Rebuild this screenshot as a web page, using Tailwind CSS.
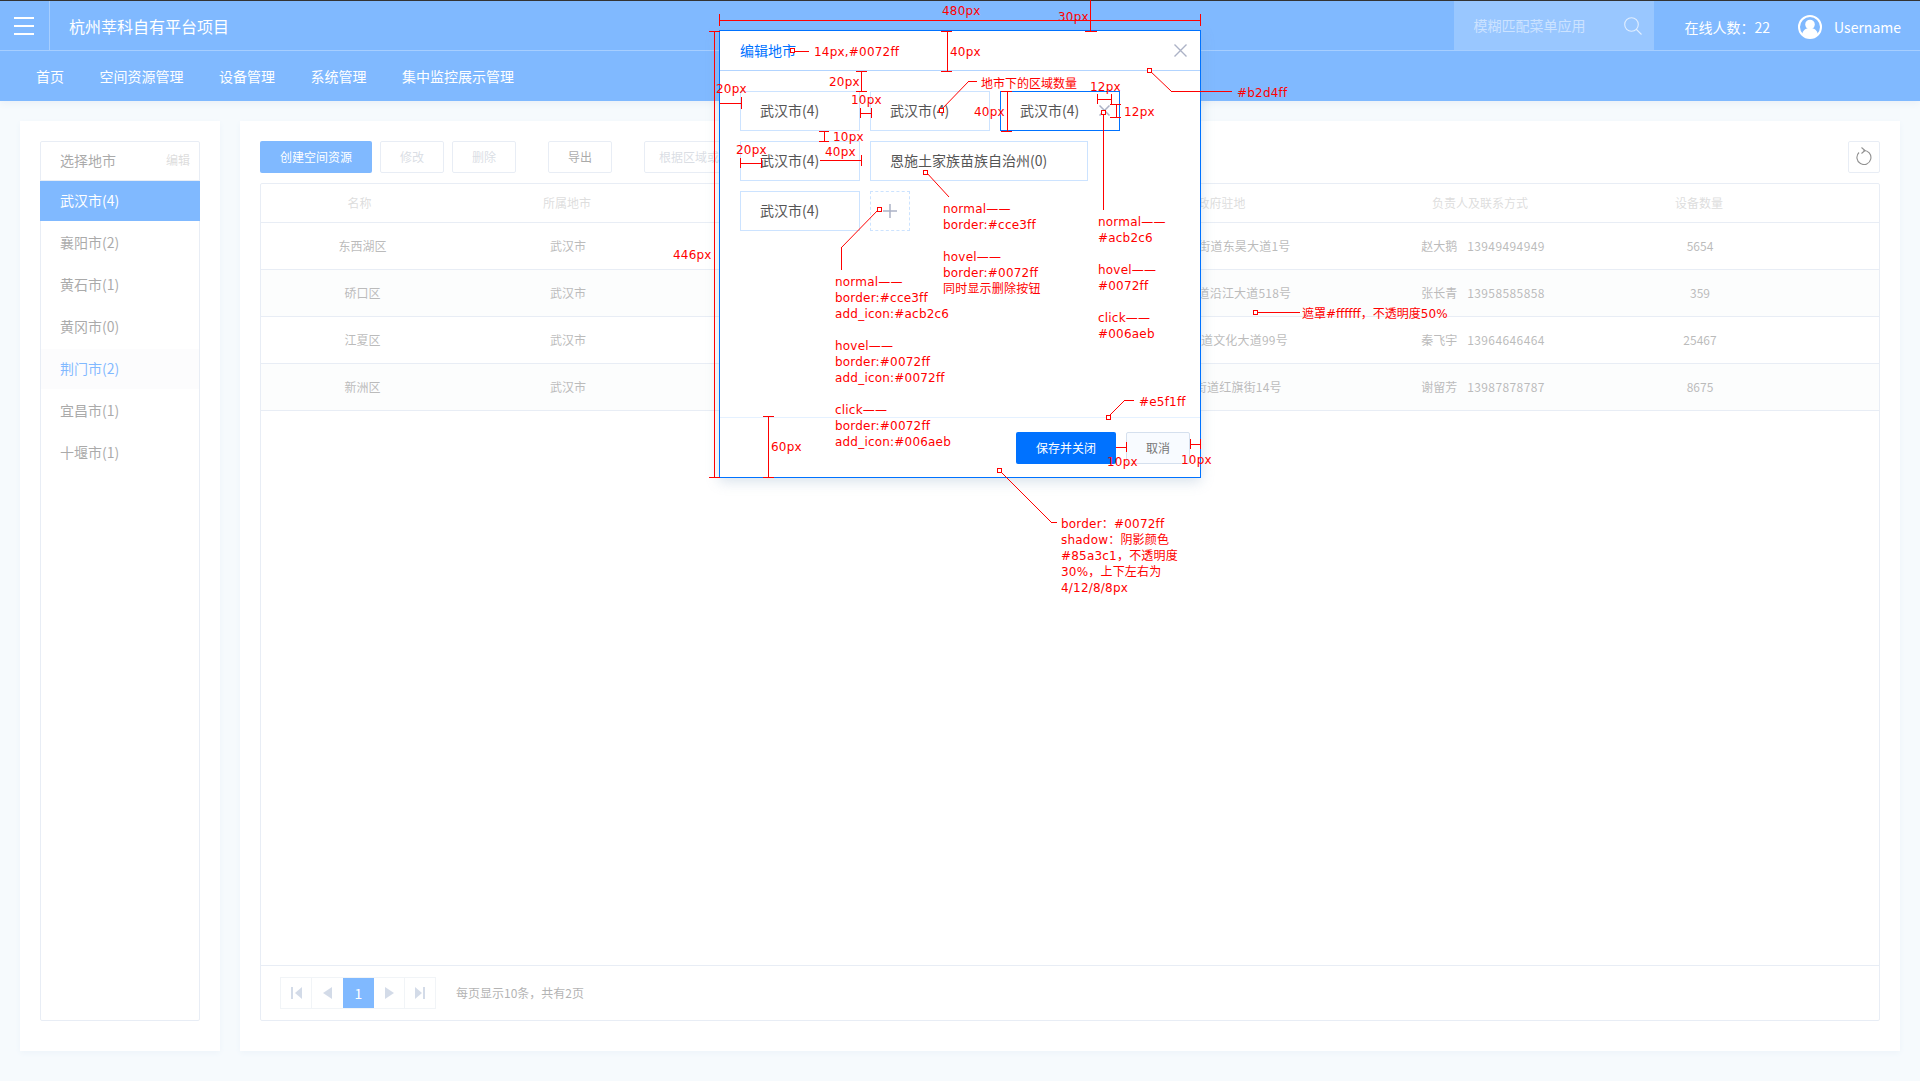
<!DOCTYPE html>
<html lang="en">
<head>
    <meta charset="UTF-8">
    <title>编辑地市</title>
    <script src="https://cdn.jsdelivr.net/npm/@tailwindcss/browser@4"></script>
</head>
<body class="bg-[#edf5fb]">
<div class="relative w-[1920px] h-[1081px] overflow-hidden flex flex-col text-[12px] text-[#333] font-['Noto_Sans_CJK_SC',sans-serif]">

    <!-- Top bar -->
    <header class="bg-[#0072ff] text-white shadow-[0_2px_8px_rgba(0,60,140,0.12)] relative">
        <div class="h-[51px] border-t border-t-[#333] border-b border-b-white/30 flex items-center">
            <button class="w-[50px] h-full border-r border-white/30 flex flex-col items-center justify-center gap-[6px] pr-[1px]">
                <span class="block w-[20px] h-[2px] bg-white"></span>
                <span class="block w-[20px] h-[2px] bg-white"></span>
                <span class="block w-[20px] h-[2px] bg-white"></span>
            </button>
            <div class="ml-[19px] text-[16px]">杭州莘科自有平台项目</div>
            <div class="ml-auto w-[200px] h-full bg-white/20 flex items-center justify-between pl-[20px] pr-[12px]">
                <span class="text-[14px] text-white/50">模糊匹配菜单应用</span>
                <svg width="18" height="18" viewBox="0 0 18 18" fill="none" stroke="#fff" stroke-opacity="0.7" stroke-width="1.1"><circle cx="7.5" cy="7.5" r="6.8"/><path d="M12.5 12.5l5 5"/></svg>
            </div>
            <div class="ml-[31px] mt-[3px] text-[14px]">在线人数：22</div>
            <svg class="ml-[28px] mt-[2px]" width="24" height="24" viewBox="0 0 24 24"><circle cx="12" cy="12" r="11" fill="none" stroke="#fff" stroke-width="2"/><circle cx="12" cy="9.5" r="4.800" fill="#fff"/><path d="M4 19.500c1-4.500 4-6.500 8-6.500s7 2 8 6.500c-2 2.500-4.500 3.500-8 3.500s-6-1-8-3.500z" fill="#fff"/></svg>
            <div class="ml-[12px] mr-[19px] mt-[3px] text-[14px]">Username</div>
        </div>
        <nav class="h-[50px] flex items-center px-[36px] text-[14px] gap-[35.5px]">
            <a>首页</a><a>空间资源管理</a><a>设备管理</a><a>系统管理</a><a>集中监控展示管理</a>
        </nav>
    </header>

    <!-- Content -->
    <main class="flex gap-[20px] px-[20px] pt-[20px] h-[950px]">
        <aside class="w-[200px] h-[930px] bg-white pt-[20px] px-[20px] pb-[30px] shadow-[0_2px_6px_rgba(120,160,210,0.15)]">
            <div class="h-full border border-[#d1dbeb] rounded-[2px]">
                <div class="h-[39px] flex items-center justify-between pl-[19px] pr-[9px] pb-[2px] border-b border-[#d1dbeb]">
                    <span class="text-[14px] text-[#555]">选择地市</span>
                    <span class="text-[#bbb]">编辑</span>
                </div>
                <div class="h-[40px] flex items-center pb-[2px] text-[14px] bg-[#0072ff] text-white -mx-[1px] pl-[20px]">武汉市(4)</div>
                <div class="h-[42px] flex items-center pl-[19px] text-[14px] text-[#555]">襄阳市(2)</div>
                <div class="h-[42px] flex items-center pl-[19px] text-[14px] text-[#555]">黄石市(1)</div>
                <div class="h-[42px] flex items-center pl-[19px] text-[14px] text-[#555]">黄冈市(0)</div>
                <div class="h-[40px] mt-[2px] flex items-center pl-[19px] pb-[2px] text-[14px] text-[#0072ff] bg-[#f8f9fb]">荆门市(2)</div>
                <div class="h-[42px] flex items-center pl-[19px] text-[14px] text-[#555]">宜昌市(1)</div>
                <div class="h-[42px] flex items-center pl-[19px] text-[14px] text-[#555]">十堰市(1)</div>
            </div>
        </aside>

        <section class="w-[1660px] h-[930px] bg-white pt-[20px] px-[20px] pb-[30px] flex flex-col shadow-[0_2px_6px_rgba(120,160,210,0.15)]">
            <div class="h-[32px] flex items-center gap-[8px]">
                <button class="w-[112px] h-[32px] bg-[#0072ff] text-white rounded-[2px]">创建空间资源</button>
                <button class="w-[64px] h-[32px] border border-[#d1dbeb] text-[#b5bcc9] rounded-[2px]">修改</button>
                <button class="w-[64px] h-[32px] border border-[#d1dbeb] text-[#b5bcc9] rounded-[2px]">删除</button>
                <button class="w-[64px] h-[32px] ml-[24px] border border-[#d1dbeb] text-[#555] rounded-[2px]">导出</button>
                <button class="w-[180px] h-[32px] ml-[24px] border border-[#d1dbeb] text-[#b5bcc9] rounded-[2px] text-left pl-[14px]">根据区域或名称筛选</button>
                <button class="w-[32px] h-[32px] ml-auto border border-[#d1dbeb] rounded-[2px] flex items-center justify-center pb-[2px]">
                    <svg width="16" height="18" viewBox="0 0 16 18" fill="none" stroke="#222" stroke-width="1.1"><path d="M7.500 3.500A7 7 0 1 1 3 5.500"/><path d="M5.500 0.500L9 3.500 5.500 6.500"/></svg>
                </button>
            </div>

            <div class="mt-[10px] flex-1 border border-[#d1dbeb] rounded-[2px] flex flex-col">
                <div class="h-[39px] grid grid-cols-[203px_208px_388px_320px_200px_240px_1fr] items-center text-center text-[#bbb] border-b border-[#d1dbeb]">
                    <span class="pr-[6px]">名称</span><span class="pr-[2px]">所属地市</span><span></span><span class="pl-[3px]">政府驻地</span><span>负责人及联系方式</span><span class="pr-[2px]">设备数量</span><span></span>
                </div>
                <div class="h-[47px] grid grid-cols-[203px_208px_388px_320px_200px_240px_1fr] items-center text-center text-[#777] border-b border-[#d1dbeb]">
                    <span>东西湖区</span><span>武汉市</span><span></span><span class="tracking-[0.2px]">东西湖区街道东昊大道1号</span><span class="flex justify-center gap-[10px] pl-[6px]"><span>赵大鹅</span><span class="tracking-[0.4px]">13949494949</span></span><span>5654</span><span></span>
                </div>
                <div class="h-[47px] grid grid-cols-[203px_208px_388px_320px_200px_240px_1fr] items-center text-center text-[#777] bg-[#f9fafb] border-b border-[#d1dbeb]">
                    <span>硚口区</span><span>武汉市</span><span></span><span class="tracking-[0.2px]">六角亭街道沿江大道518号</span><span class="flex justify-center gap-[10px] pl-[6px]"><span>张长青</span><span class="tracking-[0.4px]">13958585858</span></span><span>359</span><span></span>
                </div>
                <div class="h-[47px] grid grid-cols-[203px_208px_388px_320px_200px_240px_1fr] items-center text-center text-[#777] border-b border-[#d1dbeb]">
                    <span>江夏区</span><span>武汉市</span><span></span><span class="tracking-[0.2px]">乌龙泉街道文化大道99号</span><span class="flex justify-center gap-[10px] pl-[6px]"><span>秦飞宇</span><span class="tracking-[0.4px]">13964646464</span></span><span>25467</span><span></span>
                </div>
                <div class="h-[47px] grid grid-cols-[203px_208px_388px_320px_200px_240px_1fr] items-center text-center text-[#777] bg-[#f9fafb] border-b border-[#d1dbeb]">
                    <span>新洲区</span><span>武汉市</span><span></span><span class="tracking-[0.2px]">新洲区街道红旗街14号</span><span class="flex justify-center gap-[10px] pl-[6px]"><span>谢留芳</span><span class="tracking-[0.4px]">13987878787</span></span><span>8675</span><span></span>
                </div>

                <!-- Pagination -->
                <div class="mt-auto h-[55px] border-t border-[#d1dbeb] flex items-center pl-[19px]">
                    <div class="flex h-[32px] border border-[#e3e9ef]">
                        <span class="w-[31px] border-r border-[#e3e9ef] flex items-center justify-center"><svg width="11" height="12" viewBox="0 0 11 12" fill="#a7b7d1"><rect width="2" height="12"/><path d="M11 0v12L4 6z"/></svg></span>
                        <span class="w-[31px] flex items-center justify-center"><svg width="9" height="12" viewBox="0 0 9 12" fill="#a7b7d1"><path d="M9 0v12L0 6z"/></svg></span>
                        <span class="w-[31px] bg-[#0072ff] text-white text-[14px] flex items-center justify-center">1</span>
                        <span class="w-[31px] border-r border-[#e3e9ef] flex items-center justify-center"><svg width="9" height="12" viewBox="0 0 9 12" fill="#a7b7d1"><path d="M0 0v12l9-6z"/></svg></span>
                        <span class="w-[30px] flex items-center justify-center"><svg width="11" height="12" viewBox="0 0 11 12" fill="#a7b7d1"><path d="M0 0v12l7-6z"/><rect x="8" width="2" height="12"/></svg></span>
                    </div>
                    <span class="ml-[20px] text-[#666]">每页显示10条，共有2页</span>
                </div>
            </div>
        </section>
    </main>

    <!-- Mask -->
    <div class="absolute inset-x-0 top-[1px] bottom-0 bg-white/50"></div>

    <!-- Modal -->
    <div class="absolute left-[719px] top-[30px] w-[482px] h-[448px] bg-white border border-[#0072ff] shadow-[0_4px_12px_rgba(133,163,193,0.3)] flex flex-col">
        <div class="h-[40px] shrink-0 border-b border-[#b2d4ff] flex items-center justify-between pl-[20px] pr-[13px]">
            <span class="text-[14px] text-[#0072ff]">编辑地市</span>
            <svg width="13" height="13" viewBox="0 0 13 13" stroke="#acb2c6" stroke-width="1.4"><path d="M0.500 0.500l12 12M12.500 0.500l-12 12"/></svg>
        </div>
        <div class="flex-1 px-[20px] pt-[20px] flex flex-wrap content-start gap-[10px] text-[14px] text-[#555]">
            <div class="w-[120px] h-[40px] border border-[#cce3ff] flex items-center pl-[19px] pb-[2px]">武汉市(4)</div>
            <div class="w-[120px] h-[40px] border border-[#cce3ff] flex items-center pl-[19px] pb-[2px]">武汉市(4)</div>
            <div class="w-[120px] h-[40px] border border-[#0072ff] flex items-center justify-between pl-[19px] pr-[9px] pb-[2px]">武汉市(4)
                <svg width="11" height="11" viewBox="0 0 11 11" stroke="#acb2c6" stroke-width="1.5"><path d="M0.500 0.500l10 10M10.500 0.500l-10 10"/></svg>
            </div>
            <div class="w-[120px] h-[40px] border border-[#cce3ff] flex items-center pl-[19px] pb-[2px]">武汉市(4)</div>
            <div class="w-[218px] h-[40px] border border-[#cce3ff] flex items-center pl-[19px] pb-[2px]">恩施土家族苗族自治州(0)</div>
            <div class="w-[120px] h-[40px] border border-[#cce3ff] flex items-center pl-[19px] pb-[2px]">武汉市(4)</div>
            <div class="w-[40px] h-[40px] border border-dashed border-[#cce3ff] flex items-center justify-center">
                <svg width="14" height="14" viewBox="0 0 14 14" stroke="#acb2c6" stroke-width="1.5"><path d="M7 0v14M0 7h14"/></svg>
            </div>
        </div>
        <div class="h-[60px] shrink-0 border-t border-[#e5f1ff] flex items-center justify-end gap-[10px] pr-[10px] text-[12px]">
            <button class="w-[100px] h-[32px] bg-[#0072ff] text-white rounded-[2px]">保存并关闭</button>
            <button class="w-[64px] h-[32px] bg-[#f8fbff] border border-[#d5e0ee] text-[#777] rounded-[2px]">取消</button>
        </div>
    </div>

    <!-- Spec annotations -->
    <svg class="absolute inset-0" width="1920" height="1081" fill="none" stroke="#f00" stroke-width="1" shape-rendering="crispEdges">
        <path d="M719 20H1200M719 14V26M1200 14V26"/>
        <path d="M1090 0V31M1085 31H1097"/>
        <path d="M714 31V477M709 31H720M709 477H720"/>
        <path d="M792 51H809"/>
        <path d="M947 31V71M941 31H952M941 71H952"/>
        <path d="M861 71V91M856 71H867M856 91H867"/>
        <path d="M720 103H741M741 97V109"/>
        <path d="M860 113H871M860 108V118M871 108V118"/>
        <path d="M824 131V141M819 131H829M819 141H829"/>
        <path d="M740 163H761M740 158V168M761 158V168"/>
        <path d="M820 160H861M861 155V166"/>
        <path d="M1007 91V131M1001 91H1012M1001 131H1012"/>
        <path d="M1097 99H1111M1097 94V104M1111 94V104"/>
        <path d="M1116 104V117M1110 104H1121M1110 117H1121"/>
        <path d="M1103 112V210"/>
        <path d="M768 416V477M763 416H774M763 477H774"/>
        <path d="M1116 447H1126M1126 442V452"/>
        <path d="M1190 444H1200M1190 439V449M1200 439V449"/>
        <path d="M1255 312H1300"/>
        <path d="M1171 91H1232"/>
        <path d="M1125 400H1134"/>
        <path d="M1051 522H1057"/>
        <path d="M969 81H977"/>
        <path d="M841 248V270"/>
        <g shape-rendering="auto">
            <path d="M941 110L969 81"/>
            <path d="M1149 70L1171 91"/>
            <path d="M926 172L949 197"/>
            <path d="M879 209L841 248"/>
            <path d="M1108 417L1125 400"/>
            <path d="M999 470L1051 522"/>
        </g>
        <g fill="#fff">
            <rect x="790.500" y="48.500" width="4" height="4"/>
            <rect x="939.500" y="108.500" width="4" height="4"/>
            <rect x="1147.500" y="68.500" width="4" height="4"/>
            <rect x="923.500" y="170.500" width="4" height="4"/>
            <rect x="877.500" y="207.500" width="4" height="4"/>
            <rect x="1101.500" y="110.500" width="4" height="4"/>
            <rect x="1106.500" y="415.500" width="4" height="4"/>
            <rect x="997.500" y="468.500" width="4" height="4"/>
            <rect x="1253.500" y="310.500" width="4" height="4"/>
        </g>
    </svg>
    <div class="absolute inset-0 text-[12px] leading-[16px] tracking-[0.2px] text-[#f00] whitespace-pre font-['DejaVu_Sans','Noto_Sans_CJK_SC',sans-serif]">
        <span class="absolute left-[942px] top-[3px]">480px</span>
        <span class="absolute left-[1058px] top-[9px]">30px</span>
        <span class="absolute left-[673px] top-[247px]">446px</span>
        <span class="absolute left-[814px] top-[44px]">14px,#0072ff</span>
        <span class="absolute left-[950px] top-[44px]">40px</span>
        <span class="absolute left-[829px] top-[74px]">20px</span>
        <span class="absolute left-[716px] top-[81px]">20px</span>
        <span class="absolute left-[851px] top-[92px]">10px</span>
        <span class="absolute left-[833px] top-[129px]">10px</span>
        <span class="absolute left-[736px] top-[142px]">20px</span>
        <span class="absolute left-[825px] top-[144px]">40px</span>
        <span class="absolute left-[981px] top-[76px] tracking-normal">地市下的区域数量</span>
        <span class="absolute left-[974px] top-[104px]">40px</span>
        <span class="absolute left-[1090px] top-[79px]">12px</span>
        <span class="absolute left-[1124px] top-[104px]">12px</span>
        <span class="absolute left-[1237px] top-[85px]">#b2d4ff</span>
        <span class="absolute left-[771px] top-[439px]">60px</span>
        <span class="absolute left-[1139px] top-[394px]">#e5f1ff</span>
        <span class="absolute left-[1107px] top-[454px]">10px</span>
        <span class="absolute left-[1181px] top-[452px]">10px</span>
        <span class="absolute left-[1302px] top-[306px] tracking-normal">遮罩#ffffff，不透明度50%</span>
        <div class="absolute left-[943px] top-[201px]">normal——
border:#cce3ff

hovel——
border:#0072ff
同时显示删除按钮</div>
        <div class="absolute left-[1098px] top-[214px]">normal——
#acb2c6

hovel——
#0072ff

click——
#006aeb</div>
        <div class="absolute left-[835px] top-[274px]">normal——
border:#cce3ff
add_icon:#acb2c6

hovel——
border:#0072ff
add_icon:#0072ff

click——
border:#0072ff
add_icon:#006aeb</div>
        <div class="absolute left-[1061px] top-[516px]">border：#0072ff
shadow：阴影颜色
#85a3c1，不透明度
30%，上下左右为
4/12/8/8px</div>
    </div>
</div>
</body>
</html>
